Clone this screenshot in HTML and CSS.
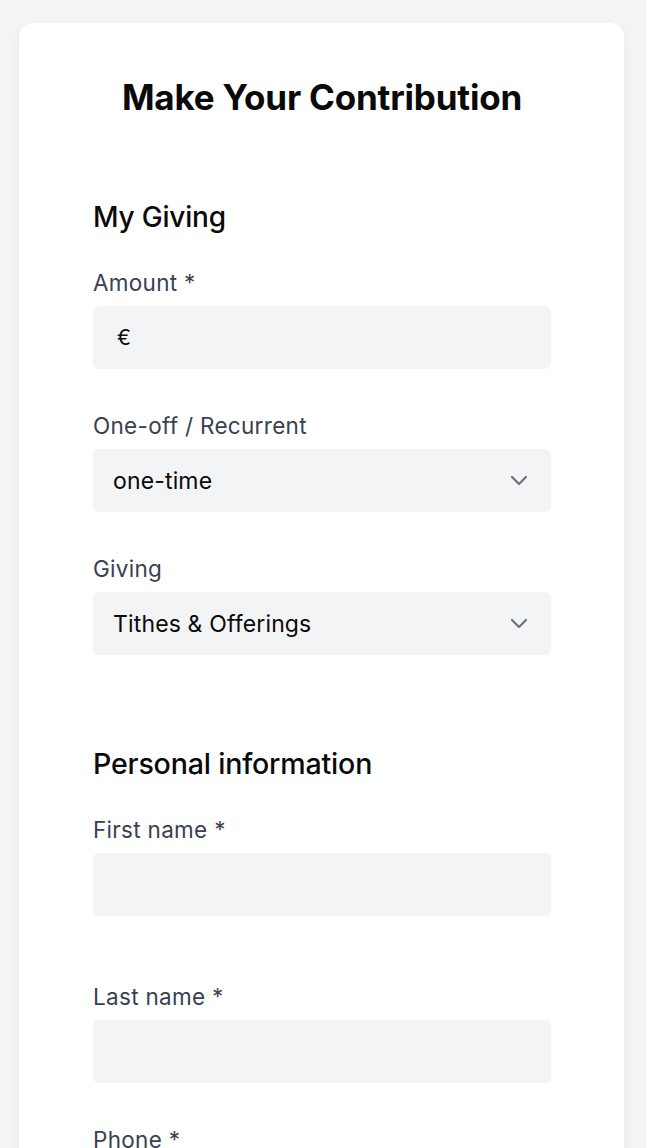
FILE: index.html
```html
<!DOCTYPE html>
<html lang="en">
<head>
<meta charset="utf-8">
<title>Make Your Contribution</title>
<link rel="stylesheet" href="styles.css">
</head>
<body>
<div class="page">
  <main class="card">
    <h1 class="title">Make Your Contribution</h1>
    <form class="form">
      <section class="section">
        <h2 class="section-title">My Giving</h2>
        <div class="field">
          <label class="label">Amount *</label>
          <div class="input input-amount"><span class="currency">€</span></div>
        </div>
        <div class="field">
          <label class="label">One-off / Recurrent</label>
          <div class="input select">
            <span class="value">one-time</span>
            <svg class="chevron" width="18" height="11" viewBox="0 0 18 11"><path d="M2 2l7 7 7-7" fill="none" stroke="#6b7280" stroke-width="2.2" stroke-linecap="round" stroke-linejoin="round"/></svg>
          </div>
        </div>
        <div class="field">
          <label class="label">Giving</label>
          <div class="input select">
            <span class="value">Tithes &amp; Offerings</span>
            <svg class="chevron" width="18" height="11" viewBox="0 0 18 11"><path d="M2 2l7 7 7-7" fill="none" stroke="#6b7280" stroke-width="2.2" stroke-linecap="round" stroke-linejoin="round"/></svg>
          </div>
        </div>
      </section>
      <section class="section section-personal">
        <h2 class="section-title">Personal information</h2>
        <div class="field">
          <label class="label">First name *</label>
          <div class="input"></div>
        </div>
        <div class="field field-wide">
          <label class="label">Last name *</label>
          <div class="input"></div>
        </div>
        <div class="field">
          <label class="label">Phone *</label>
          <div class="input"></div>
        </div>
      </section>
    </form>
  </main>
</div>
</body>
</html>
```

FILE: styles.css
```css
html, body {
  margin: 0;
  padding: 0;
  background: #f4f5f7;
  font-family: Inter, "Noto Sans", "Liberation Sans", sans-serif;
  -webkit-font-smoothing: antialiased;
}

.page {
  padding: 23px 22px 40px 19px;
}

.card {
  background: #ffffff;
  border-radius: 14px;
  box-shadow: 0 4px 18px rgba(0, 0, 0, 0.05);
  padding: 54px 73px 60px 74px;
}

.title {
  margin: 0;
  text-align: center;
  font-size: 35px;
  line-height: 40px;
  font-weight: 700;
  color: #0a0a0a;
  letter-spacing: -0.2px;
}

.form {
  display: flex;
  flex-direction: column;
}

.section {
  display: flex;
  flex-direction: column;
  margin-top: 82px;
}

.section-personal {
  margin-top: 91px;
}

.section-title {
  margin: 0 0 33px;
  font-size: 28px;
  line-height: 36px;
  font-weight: 500;
  color: #0a0a0a;
  letter-spacing: -0.2px;
}

.section-personal .section-title {
  font-size: 28.6px;
}

.field {
  display: flex;
  flex-direction: column;
  margin-top: 42px;
}

.section-title + .field {
  margin-top: 0;
}

.field-wide {
  margin-top: 66px;
}

.label {
  font-size: 22.5px;
  line-height: 29px;
  color: #374151;
  margin-bottom: 9px;
  letter-spacing: 0.3px;
}

.input {
  height: 63px;
  box-sizing: border-box;
  background: #f3f4f6;
  border-radius: 6px;
  display: flex;
  align-items: center;
  padding: 0 23px 0 20px;
  font-size: 23px;
  color: #0a0a0a;
  letter-spacing: 0.15px;
}

.input-amount {
  padding-left: 24px;
}

.currency {
  font-size: 21px;
  color: #0a0a0a;
}

.select {
  justify-content: space-between;
}

.chevron {
  display: block;
}
```
